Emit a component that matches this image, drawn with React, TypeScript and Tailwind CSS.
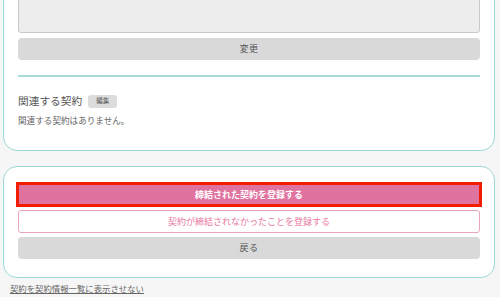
const App = () => {
  return (
    <div
      className="w-[500px] h-[297px] overflow-hidden bg-[#f6f6f6] pl-[3px] pr-[5px]"
      style={{ fontFamily: '"Noto Sans CJK JP", "Noto Sans", sans-serif' }}
    >
      <div className="-mt-[32px] rounded-b-[14px] border border-[#9fd6d6] bg-white px-[14px] pb-[24px]">
        <div className="h-[64px] rounded-[3px] border border-[#c8c8c8] bg-[#ededed]" />
        <button className="mt-[5px] flex h-[22px] w-full items-center justify-center rounded-[4px] bg-[#d9d9d9] text-[9px] tracking-[0.5px] text-[#555]">
          変更
        </button>
        <div className="mt-[15px] h-[2px] bg-[#a8dcdc]" />
        <div className="mt-[16px] flex items-center gap-[6px]">
          <span className="text-[10.7px] leading-[16px] text-[#555]">関連する契約</span>
          <span className="flex h-[13px] items-center rounded-[3px] bg-[#dcdcdc] px-[8px] text-[6.5px] text-[#555]">
            編集
          </span>
        </div>
        <p className="mt-[5px] text-[8.6px] leading-[12px] text-[#666]">
          関連する契約はありません。
        </p>
      </div>

      <div className="mt-[15px] h-[112px] rounded-[14px] border border-[#9fd6d6] bg-white px-[12px] pt-[15px]">
        <button className="flex h-[25px] w-full items-center justify-center border-[3px] border-[#f21d00] bg-[#e072a0] text-[9px] font-bold text-white">
          締結された契約を登録する
        </button>
        <div className="px-[2px]">
          <button className="mt-[3px] flex h-[23px] w-full items-center justify-center rounded-[3px] border border-[#eaa4c0] bg-white text-[9px] text-[#e87aa4]">
            契約が締結されなかったことを登録する
          </button>
          <button className="mt-[4px] flex h-[22px] w-full items-center justify-center rounded-[4px] bg-[#d9d9d9] text-[9px] tracking-[0.5px] text-[#555]">
            戻る
          </button>
        </div>
      </div>

      <a className="mt-[4px] ml-[7px] block w-fit text-[8.4px] leading-[12px] text-[#666] underline">
        契約を契約情報一覧に表示させない
      </a>
    </div>
  );
};

export default App;
